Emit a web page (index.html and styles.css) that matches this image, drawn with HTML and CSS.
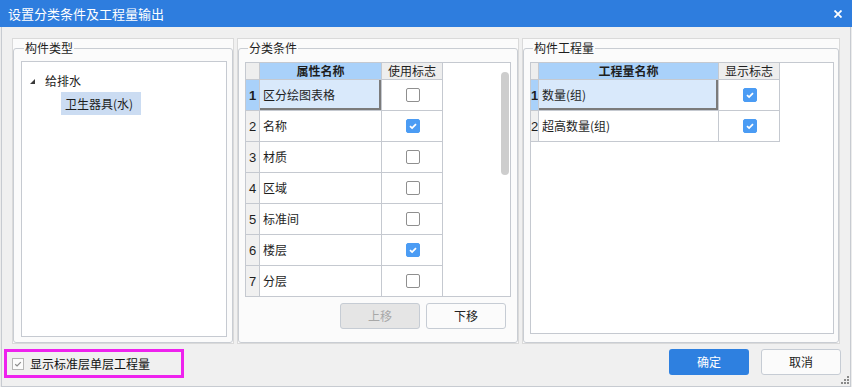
FILE: index.html
```html
<!DOCTYPE html>
<html lang="zh-CN">
<head>
<meta charset="utf-8">
<title>设置分类条件及工程量输出</title>
<link rel="stylesheet" href="styles.css">
</head>
<body>
<div class="window">
  <div class="titlebar">
    <span class="title">设置分类条件及工程量输出</span>
    <svg class="close" viewBox="0 0 8 8" width="8" height="8"><path d="M0.5 0.5 L7.5 7.5 M7.5 0.5 L0.5 7.5" stroke="#fff" stroke-width="1.8" fill="none"/></svg>
  </div>
  <div class="body">
    <div class="panels">
      <div class="panel p-left">
        <fieldset class="group g-left">
          <legend>构件类型</legend>
          <div class="tree">
            <div class="tree-row">
              <svg class="tri" viewBox="0 0 5 5" width="5" height="5"><polygon points="5,0 5,5 0,5" fill="#3a3a3a"/></svg>
              <span class="tree-text">给排水</span>
            </div>
            <div class="tree-row child">
              <span class="tree-sel">卫生器具(水)</span>
            </div>
          </div>
        </fieldset>
      </div>
      <div class="panel p-mid">
        <fieldset class="group g-mid">
          <legend>分类条件</legend>
          <div class="grid grid-mid">
            <div class="cells cells-mid">
              <div class="hd corner"></div>
              <div class="hd sel">属性名称</div>
              <div class="hd">使用标志</div>

              <div class="num sel">1</div>
              <div class="name sel">区分绘图表格</div>
              <div class="flag"><span class="cb"></span></div>

              <div class="num">2</div>
              <div class="name">名称</div>
              <div class="flag"><span class="cb on"><svg viewBox="0 0 12 12" width="12" height="12"><path d="M3 6.2 L5.1 8.1 L9 4.1" stroke="#fff" stroke-width="1.8" fill="none"/></svg></span></div>

              <div class="num">3</div>
              <div class="name">材质</div>
              <div class="flag"><span class="cb"></span></div>

              <div class="num">4</div>
              <div class="name">区域</div>
              <div class="flag"><span class="cb"></span></div>

              <div class="num">5</div>
              <div class="name">标准间</div>
              <div class="flag"><span class="cb"></span></div>

              <div class="num">6</div>
              <div class="name">楼层</div>
              <div class="flag"><span class="cb on"><svg viewBox="0 0 12 12" width="12" height="12"><path d="M3 6.2 L5.1 8.1 L9 4.1" stroke="#fff" stroke-width="1.8" fill="none"/></svg></span></div>

              <div class="num">7</div>
              <div class="name">分层</div>
              <div class="flag"><span class="cb"></span></div>
            </div>
            <div class="grid-fill"></div>
            <div class="vscroll"><div class="thumb"></div></div>
          </div>
          <div class="move-row">
            <span class="btn disabled">上移</span>
            <span class="btn default">下移</span>
          </div>
        </fieldset>
      </div>
      <div class="panel p-right">
        <fieldset class="group g-right">
          <legend>构件工程量</legend>
          <div class="grid grid-right">
            <div class="cells cells-right">
              <div class="hd corner"></div>
              <div class="hd sel">工程量名称</div>
              <div class="hd">显示标志</div>

              <div class="num sel">1</div>
              <div class="name sel">数量(组)</div>
              <div class="flag"><span class="cb on"><svg viewBox="0 0 12 12" width="12" height="12"><path d="M3 6.2 L5.1 8.1 L9 4.1" stroke="#fff" stroke-width="1.8" fill="none"/></svg></span></div>

              <div class="num">2</div>
              <div class="name">超高数量(组)</div>
              <div class="flag"><span class="cb on"><svg viewBox="0 0 12 12" width="12" height="12"><path d="M3 6.2 L5.1 8.1 L9 4.1" stroke="#fff" stroke-width="1.8" fill="none"/></svg></span></div>
            </div>
          </div>
        </fieldset>
      </div>
    </div>
    <div class="footer">
      <label class="std">
        <span class="cb2"><svg viewBox="0 0 10 10" width="10" height="10"><path d="M2.2 5.2 L4.1 7 L7.8 3.2" stroke="#8c8c8c" stroke-width="1.2" fill="none"/></svg></span>
        <span class="std-text">显示标准层单层工程量</span>
      </label>
      <div class="actions">
        <span class="btn primary">确定</span>
        <span class="btn default">取消</span>
      </div>
    </div>
  </div>
  <svg class="grip" viewBox="0 0 9 9" width="9" height="9">
    <rect x="7" y="1" width="2" height="2" fill="#8a8a8a"/>
    <rect x="4" y="4" width="2" height="2" fill="#8a8a8a"/>
    <rect x="7" y="4" width="2" height="2" fill="#8a8a8a"/>
    <rect x="1" y="7" width="2" height="2" fill="#8a8a8a"/>
    <rect x="4" y="7" width="2" height="2" fill="#8a8a8a"/>
    <rect x="7" y="7" width="2" height="2" fill="#8a8a8a"/>
  </svg>
</div>
</body>
</html>
```

FILE: styles.css
```css
* { box-sizing: border-box; }
html, body { margin: 0; padding: 0; }
body {
  font-family: "Noto Sans CJK SC", "Noto Sans", sans-serif;
  font-size: 12px;
  color: #1e1e1e;
  background: #f0f0f0;
}
.window {
  position: relative;
  width: 852px;
  height: 387px;
  display: flex;
  flex-direction: column;
  background: #ececec;
}
.titlebar {
  flex: none;
  height: 27px;
  background: #2e7dde;
  color: #fff;
  display: flex;
  align-items: center;
  justify-content: space-between;
  padding: 0 10px 0 8px;
  font-size: 13px;
  line-height: 16px;
}
.close { display: block; }
.body {
  flex: 1;
  margin: 0 1px;
  border: 1px solid #c7cbd1;
  border-top: none;
  background: #f0f0f0;
  display: flex;
  flex-direction: column;
}
.panels {
  display: flex;
  gap: 3px;
  margin: 11px 10px 0 10px;
  height: 306px;
  flex: none;
}
.panel {
  background: #fbfbfb;
  border: 1px solid #dadada;
  display: flex;
}
.p-left { width: 222px; }
.p-mid { width: 282px; }
.p-right { width: 318px; }
.group {
  flex: 1;
  min-width: 0;
  margin: 1px 0 0 0;
  border: 1px solid #c9cdd3;
  border-radius: 3px;
  display: flex;
  flex-direction: column;
}
.group legend {
  font-size: 12px;
  line-height: 16px;
  height: 16px;
  padding: 0 1px;
  margin-left: 3px;
  color: #1e1e1e;
}
.g-left { padding: 5px 5px 5px 7px; }
.g-mid { padding: 6px 6px 13px 6px; }
.g-right { padding: 6px 4px 8px 6px; }

/* tree */
.tree {
  flex: 1;
  background: #fff;
  border: 1px solid #c6cad1;
  padding-top: 7px;
}
.tree-row {
  height: 23px;
  display: flex;
  align-items: center;
  padding-left: 8px;
}
.tri { display: block; margin-top: 1px; }
.tree-text { margin-left: 10px; line-height: 16px; }
.tree-row.child { padding-left: 39px; }
.tree-sel {
  background: #cbdcf2;
  height: 23px;
  line-height: 23px;
  width: 80px;
  padding: 0 0 0 4px;
}

/* grids */
.grid {
  background: #fff;
  border: 1px solid #c5c9d0;
  display: flex;
  overflow: hidden;
}
.grid-mid { height: 235px; flex: none; }
.grid-right { flex: 1; }
.cells {
  display: grid;
  grid-template-rows: 17px;
  grid-auto-rows: 31px;
  align-content: start;
  flex: none;
}
.cells-mid { grid-template-columns: 14px 122px 61px; }
.cells-right { grid-template-columns: 8px 180px 61px; }
.cells > div {
  border-right: 1px solid #c5c9d0;
  border-bottom: 1px solid #c5c9d0;
  display: flex;
  align-items: center;
  overflow: hidden;
  white-space: nowrap;
}
.cells .hd {
  justify-content: center;
  background: #eeeeee;
  line-height: 16px;
  color: #1e1e1e;
}
.cells .hd.sel { background: #a9d1fa; font-weight: bold; }
.cells .hd.corner { background: #eeeeee; }
.cells .num {
  justify-content: center;
  background: #f0f0f0;
  font-family: "Liberation Sans", "DejaVu Sans", sans-serif;
  font-size: 13px;
}
.cells .num.sel { background: #a9d1fa; font-weight: bold; }
.cells .name { padding-left: 3px; line-height: 16px; }
.cells .name.sel {
  background: #d9e9fb;
  box-shadow: inset -2px -2px 0 #7b7b7b;
}
.cells .flag { justify-content: center; padding-left: 1px; }
.cb {
  width: 14px;
  height: 14px;
  border: 1px solid #8f8f8f;
  border-radius: 2px;
  background: #fff;
  display: flex;
  align-items: center;
  justify-content: center;
}
.cb.on { background: #4b9cf4; border-color: #4b9cf4; }
.cb svg { display: block; }
.grid-fill { flex: 1; }
.vscroll {
  width: 8px;
  margin-right: 1px;
  padding-top: 9px;
}
.thumb {
  width: 8px;
  height: 103px;
  border-radius: 4px;
  background: #cdcdcd;
}
.move-row {
  display: flex;
  justify-content: flex-end;
  gap: 6px;
  margin-top: 6px;
  padding-right: 5px;
}

/* buttons */
.btn {
  width: 80px;
  height: 26px;
  border-radius: 3px;
  display: flex;
  align-items: center;
  justify-content: center;
  font-size: 12px;
  line-height: 16px;
}
.btn.primary { background: #2e80e0; color: #fff; }
.btn.default { background: #fbfbfb; border: 1px solid #c6ccd4; color: #222; }
.btn.disabled { background: #e5e5e5; border: 1px solid #c6ccd4; color: #a8a8a8; }

/* footer */
.footer {
  display: flex;
  align-items: flex-start;
  justify-content: space-between;
  padding: 5px 9px 0 2px;
}
.std {
  display: flex;
  align-items: center;
  width: 180px;
  height: 29px;
  border: 3px solid #ee22ee;
  padding-left: 5px;
  gap: 6px;
}
.cb2 {
  width: 12px;
  height: 12px;
  border: 1px solid #b6b6b6;
  background: #fcfcfc;
  display: flex;
  align-items: center;
  justify-content: center;
}
.cb2 svg { display: block; }
.std-text { line-height: 16px; color: #111; }
.actions { display: flex; gap: 12px; }
.grip {
  position: absolute;
  right: 3px;
  bottom: 3px;
  display: block;
}
```
